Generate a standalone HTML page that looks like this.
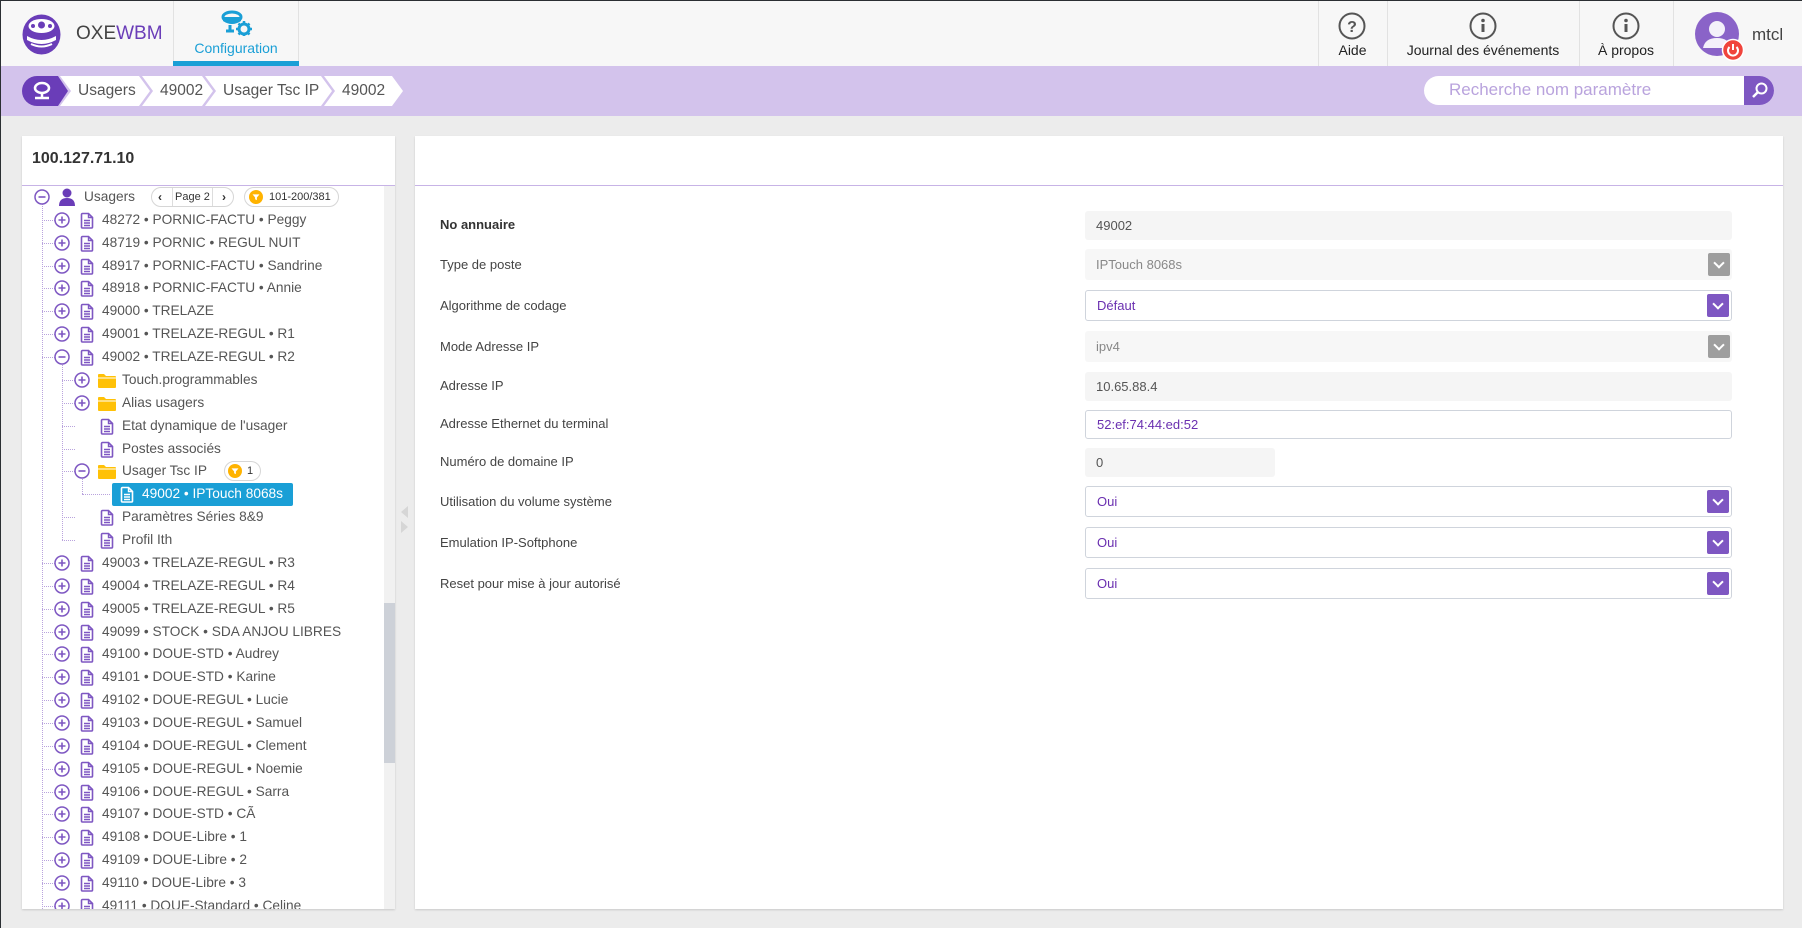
<!DOCTYPE html>
<html><head><meta charset="utf-8"><style>
*{box-sizing:border-box;margin:0;padding:0}
body{width:1802px;height:928px;overflow:hidden;background:#ececec;font-family:"Liberation Sans",sans-serif;position:relative;border-top:1px solid #2b2f33;border-left:1px solid #2b2f33}
.a{position:absolute}
#hdr{left:0;top:0;width:1802px;height:65px;background:#f7f7f7}
.sep{top:0;width:1px;height:65px;background:#e2e2e2}
.hl{font-size:14px;color:#222;text-align:center}
#bc{left:0;top:65px;width:1802px;height:50px;background:#d3c3ec}
.ch{top:75px;height:30px;background:#fff;clip-path:polygon(0 0,calc(100% - 11px) 0,100% 50%,calc(100% - 11px) 100%,0 100%,11px 50%);font-size:15.5px;color:#555;line-height:30px;padding-left:18px;white-space:nowrap}
.panel{background:#fff;box-shadow:0 1px 2px rgba(0,0,0,.15);overflow:hidden}
.r{position:absolute;height:22px;line-height:22px;font-size:13.7px;color:#555;white-space:nowrap}
.r svg{position:absolute;top:3px}
.lb{left:439px;font-size:13px;color:#444}
.in{left:1084px;width:647px;height:29px;background:#f5f5f5;border-radius:3px;font-size:13px;color:#555;line-height:29px;padding-left:11px}
.sl{border:1px solid #cfd4dc;background:#fff;color:#6a2fb0;height:31px;line-height:29px}
.dis{background:#f7f7f7;color:#888;height:31px;line-height:31px}
.btn{position:absolute;right:2px;top:3px;width:22px;height:23px;background:#7e57c2;border-radius:2px}
.dis .btn{background:#9e9e9e;top:4px}
.btn:after{content:"";position:absolute;left:7px;top:6px;width:6px;height:6px;border-right:2px solid #fff;border-bottom:2px solid #fff;transform:rotate(45deg)}
.dv{border-left:1px dotted #b9a3dd}
.dh{border-top:1px dotted #b9a3dd;height:0}
</style></head><body>
<svg width="0" height="0" style="position:absolute">
<defs>
<symbol id="pl" viewBox="0 0 16 16"><circle cx="8" cy="8" r="7" fill="#fff" stroke="#7e57c2" stroke-width="1.5"/><path d="M8 4.5v7M4.5 8h7" stroke="#7e57c2" stroke-width="1.6"/></symbol>
<symbol id="mi" viewBox="0 0 16 16"><circle cx="8" cy="8" r="7" fill="#fff" stroke="#7e57c2" stroke-width="1.5"/><path d="M4.5 8h7" stroke="#7e57c2" stroke-width="1.6"/></symbol>
<symbol id="dc" viewBox="0 0 14 17"><path d="M1.5 2.5a1 1 0 0 1 1-1h6l4 4v9.5a1 1 0 0 1-1 1h-9a1 1 0 0 1-1-1z" fill="none" stroke="#7e57c2" stroke-width="1.6"/><path d="M8.5 1.5v4h4M4 8.5h6M4 11h6M4 13.5h6" stroke="#7e57c2" stroke-width="1.4" fill="none"/></symbol>
<symbol id="dw" viewBox="0 0 14 17"><path d="M1.5 2.5a1 1 0 0 1 1-1h6l4 4v9.5a1 1 0 0 1-1 1h-9a1 1 0 0 1-1-1z" fill="none" stroke="#fff" stroke-width="1.6"/><path d="M8.5 1.5v4h4M4 8.5h6M4 11h6M4 13.5h6" stroke="#fff" stroke-width="1.4" fill="none"/></symbol>
<symbol id="fo" viewBox="0 0 18 15"><path d="M0 2a1 1 0 0 1 1-1h5l2 2h9a1 1 0 0 1 1 1v10a1 1 0 0 1-1 1H1a1 1 0 0 1-1-1z" fill="#ffc107"/><path d="M0 5h18" stroke="#fff" stroke-width="1"/></symbol>
<symbol id="fi" viewBox="0 0 16 16"><circle cx="8" cy="8" r="8" fill="#ffb300"/><path d="M4 5h8l-3 3.5v3l-2 -1v-2z" fill="#fff"/></symbol>
</defs></svg>

<div id="hdr" class="a"></div>
<svg class="a" style="left:20px;top:13px" width="41" height="41" viewBox="0 0 41 41"><ellipse cx="20.5" cy="20.5" rx="19" ry="20" fill="#6a3db8"/><ellipse cx="20.5" cy="12" rx="13" ry="7" fill="#fff"/><circle cx="20.5" cy="11" r="3.5" fill="#6a3db8"/><circle cx="12" cy="12" r="2" fill="#6a3db8"/><circle cx="29" cy="12" r="2" fill="#6a3db8"/><path d="M6 22q14.5 8 29 0v4q-14.5 8-29 0z" fill="#fff"/><path d="M10 30q10.5 5 21 0" stroke="#fff" stroke-width="2" fill="none"/></svg>
<div class="a" style="left:75px;top:22px;font-size:19px;color:#444">OXE<span style="color:#6a3db8">WBM</span></div>
<div class="a" style="left:172px;top:0;width:126px;height:65px;border-left:1px solid #e2e2e2;border-right:1px solid #e2e2e2"></div>
<svg class="a" style="left:220px;top:9px" width="32" height="26" viewBox="0 0 32 26"><ellipse cx="11" cy="7" rx="9" ry="5" fill="none" stroke="#1a9fd6" stroke-width="3"/><path d="M2 7v4q9 6 18 0V7" fill="#1a9fd6"/><path d="M5 21h8M9 15v6" stroke="#1a9fd6" stroke-width="3"/><circle cx="23" cy="19" r="5" fill="none" stroke="#1a9fd6" stroke-width="3"/><path d="M23 11v3M23 24v2M15 19h3M28 19h3M17.5 13.5l2 2M28.5 24.5l-2-2M17.5 24.5l2-2M28.5 13.5l-2 2" stroke="#1a9fd6" stroke-width="2.5"/></svg>
<div class="a" style="left:172px;top:39px;width:126px;text-align:center;font-size:14px;color:#1a9fd6">Configuration</div>
<div class="a" style="left:172px;top:60px;width:126px;height:5px;background:#1a9fd6"></div>

<div class="a sep" style="left:1317px"></div><div class="a sep" style="left:1386px"></div><div class="a sep" style="left:1578px"></div><div class="a sep" style="left:1672px"></div>
<svg class="a" style="left:1337px;top:11px" width="28" height="28"><circle cx="14" cy="14" r="12.5" fill="none" stroke="#555" stroke-width="2"/><text x="14" y="20" text-anchor="middle" font-family="Liberation Sans" font-weight="bold" font-size="16" fill="#555">?</text></svg>
<div class="a hl" style="left:1317px;top:41px;width:69px">Aide</div>
<svg class="a" style="left:1468px;top:11px" width="28" height="28"><circle cx="14" cy="14" r="12.5" fill="none" stroke="#555" stroke-width="2"/><circle cx="14" cy="8.5" r="1.8" fill="#555"/><path d="M14 12v8" stroke="#555" stroke-width="3"/></svg>
<div class="a hl" style="left:1386px;top:41px;width:192px">Journal des événements</div>
<svg class="a" style="left:1611px;top:11px" width="28" height="28"><circle cx="14" cy="14" r="12.5" fill="none" stroke="#555" stroke-width="2"/><circle cx="14" cy="8.5" r="1.8" fill="#555"/><path d="M14 12v8" stroke="#555" stroke-width="3"/></svg>
<div class="a hl" style="left:1578px;top:41px;width:94px">À propos</div>
<svg class="a" style="left:1693px;top:10px" width="52" height="52"><circle cx="23" cy="23" r="22" fill="#8a63c8"/><circle cx="23" cy="18" r="8" fill="#fff" opacity=".9"/><path d="M9 37q2-10 14-10t14 10" fill="#fff" opacity=".9"/><circle cx="39" cy="39" r="10.5" fill="#f0443c" stroke="#fff" stroke-width="1.5"/><path d="M35.5 36a5 5 0 1 0 7 0" stroke="#fff" stroke-width="2" fill="none"/><path d="M39 33v6" stroke="#fff" stroke-width="2"/></svg>
<div class="a" style="left:1751px;top:24px;font-size:17px;color:#444">mtcl</div>

<div id="bc" class="a"></div>
<div class="a" style="left:21px;top:75px;width:46px;height:30px;background:#6a3db8;border-radius:15px 0 0 15px;clip-path:polygon(0 0,36px 0,100% 50%,36px 100%,0 100%)"></div>
<svg class="a" style="left:30px;top:80px" width="22" height="20"><ellipse cx="11" cy="7" rx="7" ry="5" fill="none" stroke="#fff" stroke-width="2.5"/><path d="M11 12v5M4 17h14" stroke="#fff" stroke-width="2.5"/></svg>
<div class="a ch" style="left:59px;width:90px">Usagers</div>
<div class="a ch" style="left:141px;width:71px">49002</div>
<div class="a ch" style="left:204px;width:127px">Usager Tsc IP</div>
<div class="a ch" style="left:323px;width:79px">49002</div>
<div class="a" style="left:1423px;top:75px;width:350px;height:29px;background:#fff;border-radius:15px"></div>
<div class="a" style="left:1448px;top:79px;font-size:17px;color:#b9a3dd">Recherche nom paramètre</div>
<div class="a" style="left:1743px;top:75px;width:30px;height:29px;background:#7e57c2;border-radius:0 15px 15px 0"></div>
<svg class="a" style="left:1749px;top:80px" width="20" height="20"><circle cx="11.5" cy="7.5" r="5" fill="none" stroke="#fff" stroke-width="2"/><path d="M8 11l-5 5" stroke="#fff" stroke-width="2.5"/></svg>

<div class="a panel" style="left:21px;top:135px;width:373px;height:773px">
 <div class="a" style="left:10px;top:14px;font-size:16px;font-weight:bold;color:#333">100.127.71.10</div>
 <div class="a" style="left:0;top:49px;width:373px;height:1px;background:#c7b3e6"></div>
 <div class="a" style="left:362px;top:50px;width:11px;height:723px;background:#f1f1f1"></div>
 <div class="a" style="left:362px;top:467px;width:11px;height:160px;background:#cdd1d8"></div>
 <div class="a dv" style="left:20px;top:61px;height:720px"></div>
 <div class="a dv" style="left:40px;top:221px;height:183px"></div>
 <div class="a dv" style="left:60px;top:336px;height:22px"></div>
 <div class="a dh" style="left:60px;top:358px;width:28px"></div>
 <div id="tree">
 <div class="r" style="top:50px;left:12px"><svg style="left:0" width="16" height="16"><use href="#mi"/></svg><svg style="left:25px;top:2px" width="16" height="18" viewBox="0 0 16 18"><circle cx="8" cy="5" r="4.5" fill="#6a3db8"/><path d="M0 18q0-8 8-8t8 8z" fill="#6a3db8"/></svg><span style="position:absolute;left:50px">Usagers</span>
  <span style="position:absolute;left:117px;top:1px;width:83px;height:20px;border:1px solid #d6d6d6;border-radius:10px;font-size:11px;line-height:18px;color:#333"><b style="position:absolute;left:6px;font-size:12px">‹</b><span style="position:absolute;left:20px;border-left:1px solid #ddd;border-right:1px solid #ddd;padding:0 2px">Page 2</span><b style="position:absolute;left:70px;font-size:12px">›</b></span>
  <span style="position:absolute;left:210px;top:1px;width:95px;height:20px;border:1px solid #d6d6d6;border-radius:10px;font-size:11px;line-height:18px;color:#333"><svg style="left:4px;top:2px" width="14" height="14"><use href="#fi"/></svg><span style="position:absolute;left:24px">101-200/381</span></span></div>
 </div>
</div>
<div class="a" style="left:400px;top:505px;width:0;height:0;border-right:7px solid #d6d6d6;border-top:6px solid transparent;border-bottom:6px solid transparent"></div>
<div class="a" style="left:400px;top:520px;width:0;height:0;border-left:7px solid #d6d6d6;border-top:6px solid transparent;border-bottom:6px solid transparent"></div>

<div class="a panel" style="left:414px;top:135px;width:1368px;height:773px"><div class="a" style="left:0;top:49px;width:1368px;height:1px;background:#c7b3e6"></div></div>

<div class="a lb" style="top:216px;font-weight:bold;color:#333">No annuaire</div>
<div class="a lb" style="top:256px">Type de poste</div>
<div class="a lb" style="top:297px">Algorithme de codage</div>
<div class="a lb" style="top:338px">Mode Adresse IP</div>
<div class="a lb" style="top:377px">Adresse IP</div>
<div class="a lb" style="top:415px">Adresse Ethernet du terminal</div>
<div class="a lb" style="top:453px">Numéro de domaine IP</div>
<div class="a lb" style="top:493px">Utilisation du volume système</div>
<div class="a lb" style="top:534px">Emulation IP-Softphone</div>
<div class="a lb" style="top:575px">Reset pour mise à jour autorisé</div>

<div class="a in" style="top:210px">49002</div>
<div class="a in dis" style="top:248px">IPTouch 8068s<div class="btn"></div></div>
<div class="a in sl" style="top:289px">Défaut<div class="btn"></div></div>
<div class="a in dis" style="top:330px">ipv4<div class="btn"></div></div>
<div class="a in" style="top:371px">10.65.88.4</div>
<div class="a in sl" style="top:409px;height:29px;line-height:27px">52:ef:74:44:ed:52</div>
<div class="a in" style="top:447px;width:190px">0</div>
<div class="a in sl" style="top:485px">Oui<div class="btn"></div></div>
<div class="a in sl" style="top:526px">Oui<div class="btn"></div></div>
<div class="a in sl" style="top:567px">Oui<div class="btn"></div></div>

<script>
var rows=[
[1,'p','d','48272 • PORNIC-FACTU • Peggy'],[1,'p','d','48719 • PORNIC • REGUL NUIT'],[1,'p','d','48917 • PORNIC-FACTU • Sandrine'],[1,'p','d','48918 • PORNIC-FACTU • Annie'],[1,'p','d','49000 • TRELAZE'],[1,'p','d','49001 • TRELAZE-REGUL • R1'],[1,'m','d','49002 • TRELAZE-REGUL • R2'],
[2,'p','f','Touch.programmables'],[2,'p','f','Alias usagers'],[2,'','d',"Etat dynamique de l'usager"],[2,'','d','Postes associés'],[2,'m','f','Usager Tsc IP'],[3,'','s','49002 • IPTouch 8068s'],[2,'','d','Paramètres Séries 8&9'],[2,'','d','Profil Ith'],
[1,'p','d','49003 • TRELAZE-REGUL • R3'],[1,'p','d','49004 • TRELAZE-REGUL • R4'],[1,'p','d','49005 • TRELAZE-REGUL • R5'],[1,'p','d','49099 • STOCK • SDA ANJOU LIBRES'],[1,'p','d','49100 • DOUE-STD • Audrey'],[1,'p','d','49101 • DOUE-STD • Karine'],[1,'p','d','49102 • DOUE-REGUL • Lucie'],[1,'p','d','49103 • DOUE-REGUL • Samuel'],[1,'p','d','49104 • DOUE-REGUL • Clement'],[1,'p','d','49105 • DOUE-REGUL • Noemie'],[1,'p','d','49106 • DOUE-REGUL • Sarra'],[1,'p','d','49107 • DOUE-STD • CÃ'],[1,'p','d','49108 • DOUE-Libre • 1'],[1,'p','d','49109 • DOUE-Libre • 2'],[1,'p','d','49110 • DOUE-Libre • 3'],[1,'p','d','49111 • DOUE-Standard • Celine']];
var h='';
rows.forEach(function(r,i){var t=50+22.87*(i+1),L=r[0],x=(L-1)*20+32,c=t+11;
 if(L<3)h+='<div class="a dh" style="left:'+(L*20)+'px;top:'+c+'px;width:13px"></div>';
 if(r[2]=='s'){h+='<div class="a" style="left:90px;top:'+t+'px;width:181px;height:23px;background:#1a9fd6;border-radius:2px"></div><div class="r" style="top:'+t+'px;left:98px;color:#fff"><svg style="left:0;top:3px" width="14" height="17"><use href="#dw"/></svg><span style="position:absolute;left:22px">'+r[3]+'</span></div>';return;}
 h+='<div class="r" style="top:'+t+'px;left:'+x+'px">';
 if(r[1])h+='<svg style="left:0" width="16" height="16"><use href="#'+(r[1]=='p'?'pl':'mi')+'"/></svg>';
 h+=(r[2]=='f'?'<svg style="left:24px;top:4px" width="18" height="15"><use href="#fo"/></svg>':'<svg style="left:26px;top:3px" width="14" height="17"><use href="#dc"/></svg>');
 h+='<span style="position:absolute;left:48px">'+r[3].replace('&','&amp;')+'</span>';
 if(r[3]=='Usager Tsc IP')h+='<span style="position:absolute;left:150px;top:1px;width:37px;height:20px;border:1px solid #d6d6d6;border-radius:10px;font-size:11px;line-height:18px;color:#333"><svg style="left:3px;top:2px" width="14" height="14"><use href="#fi"/></svg><span style="position:absolute;left:22px">1</span></span>';
 h+='</div>';});
document.getElementById('tree').insertAdjacentHTML('beforeend',h);
</script>
</body></html>
